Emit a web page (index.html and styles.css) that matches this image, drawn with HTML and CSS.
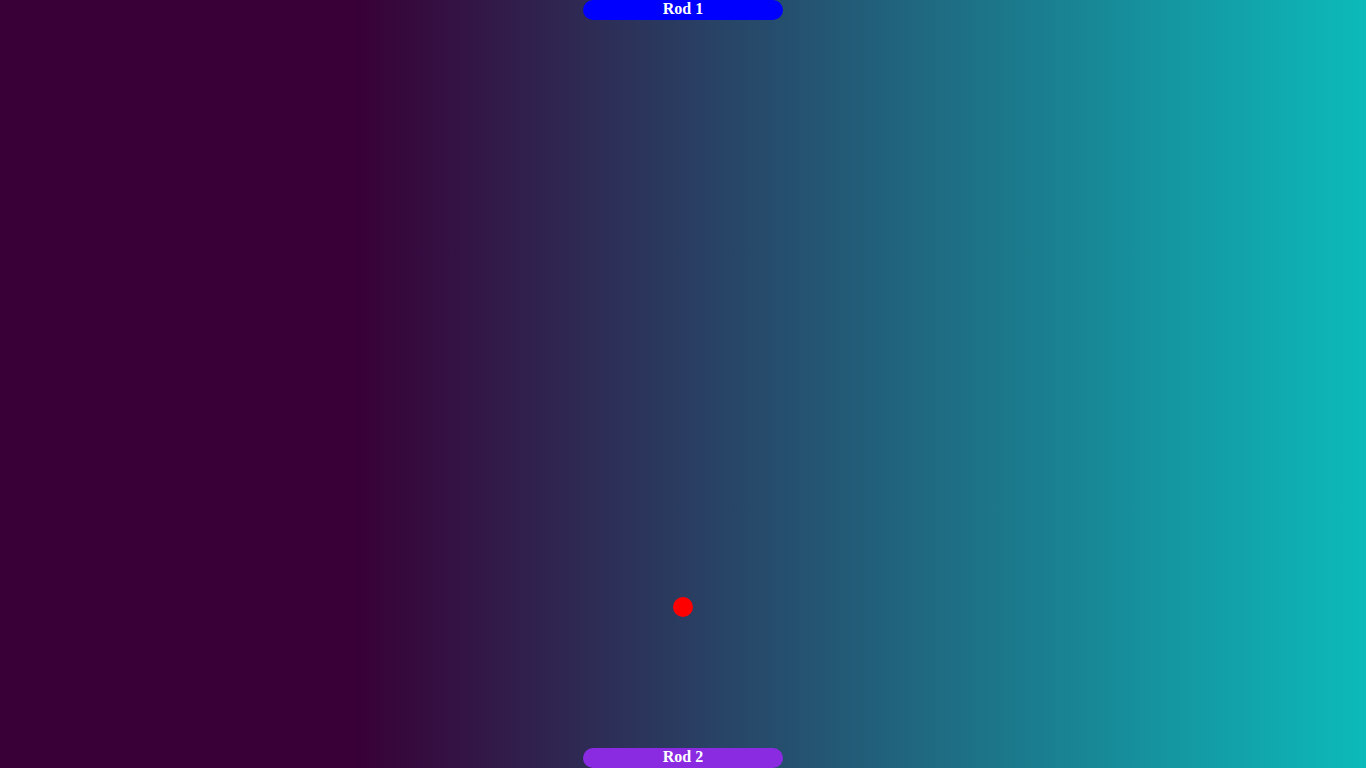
FILE: index.html
```html
<!DOCTYPE html>
<html>
<head>
<meta charset="utf-8">
<link rel="stylesheet" href="styles.css">
</head>
<body>
<div class="game">
  <div class="rod rod-top">Rod 1</div>
  <div class="ball"></div>
  <div class="rod rod-bottom">Rod 2</div>
</div>
</body>
</html>
```
FILE: styles.css
```css
html, body {
  margin: 0;
  padding: 0;
  height: 100%;
}
body {
  background-color: #0cbaba;
  background-image: linear-gradient(270deg, #0cbaba 0%, #380036 74%);
  font-family: "Liberation Serif", "Times New Roman", serif;
  overflow: hidden;
}
.game {
  position: relative;
  height: 100vh;
  display: flex;
  flex-direction: column;
  justify-content: space-between;
  align-items: center;
}
.rod {
  width: 200px;
  height: 20px;
  border-radius: 10px;
  color: #fff;
  font-weight: bold;
  font-size: 16px;
  line-height: 18px;
  text-align: center;
}
.rod-top {
  background: #0000ff;
}
.rod-bottom {
  background: #8a2be2;
}
.ball {
  position: absolute;
  left: 673px;
  top: 597px;
  width: 20px;
  height: 20px;
  border-radius: 50%;
  background: #ff0000;
}
```
